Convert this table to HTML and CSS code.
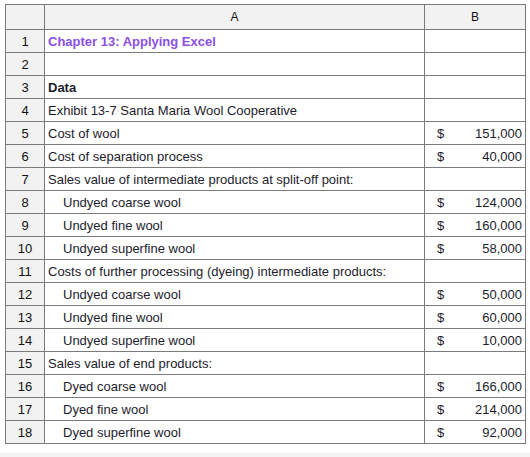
FILE: index.html
```html
<!DOCTYPE html>
<html>
<head>
<meta charset="utf-8">
<link rel="stylesheet" href="styles.css">
</head>
<body>
<div class="sheet">
<table class="grid">
<colgroup><col class="c-idx"><col class="c-a"><col class="c-b"></colgroup>
<thead>
<tr class="hdr"><th></th><th>A</th><th>B</th></tr>
</thead>
<tbody>
<tr><td class="idx">1</td><td class="title">Chapter 13: Applying Excel</td><td></td></tr>
<tr><td class="idx">2</td><td></td><td></td></tr>
<tr><td class="idx">3</td><td class="bold">Data</td><td></td></tr>
<tr><td class="idx">4</td><td>Exhibit 13-7 Santa Maria Wool Cooperative</td><td></td></tr>
<tr><td class="idx">5</td><td>Cost of wool</td><td><div class="money"><span>$</span><span>151,000</span></div></td></tr>
<tr><td class="idx">6</td><td>Cost of separation process</td><td><div class="money"><span>$</span><span>40,000</span></div></td></tr>
<tr><td class="idx">7</td><td>Sales value of intermediate products at split-off point:</td><td></td></tr>
<tr><td class="idx">8</td><td class="ind">Undyed coarse wool</td><td><div class="money"><span>$</span><span>124,000</span></div></td></tr>
<tr><td class="idx">9</td><td class="ind">Undyed fine wool</td><td><div class="money"><span>$</span><span>160,000</span></div></td></tr>
<tr><td class="idx">10</td><td class="ind">Undyed superfine wool</td><td><div class="money"><span>$</span><span>58,000</span></div></td></tr>
<tr><td class="idx">11</td><td>Costs of further processing (dyeing) intermediate products:</td><td></td></tr>
<tr><td class="idx">12</td><td class="ind">Undyed coarse wool</td><td><div class="money"><span>$</span><span>50,000</span></div></td></tr>
<tr><td class="idx">13</td><td class="ind">Undyed fine wool</td><td><div class="money"><span>$</span><span>60,000</span></div></td></tr>
<tr><td class="idx">14</td><td class="ind">Undyed superfine wool</td><td><div class="money"><span>$</span><span>10,000</span></div></td></tr>
<tr><td class="idx">15</td><td>Sales value of end products:</td><td></td></tr>
<tr><td class="idx">16</td><td class="ind">Dyed coarse wool</td><td><div class="money"><span>$</span><span>166,000</span></div></td></tr>
<tr><td class="idx">17</td><td class="ind">Dyed fine wool</td><td><div class="money"><span>$</span><span>214,000</span></div></td></tr>
<tr><td class="idx">18</td><td class="ind">Dyed superfine wool</td><td><div class="money"><span>$</span><span>92,000</span></div></td></tr>
</tbody>
</table>
</div>
<div class="strip"></div>
</body>
</html>
```
FILE: styles.css
```css
html, body {
  margin: 0;
  padding: 0;
  background: #ffffff;
}
body {
  font-family: "Liberation Sans", Arial, sans-serif;
  font-size: 13px;
  color: #1c1c2c;
}
.sheet {
  padding: 4px 5px 0 5px;
  height: 453px;
  box-sizing: border-box;
}
.grid {
  border-collapse: collapse;
  table-layout: fixed;
  width: 520px;
}
.c-idx { width: 39px; }
.c-a { width: 380px; }
.c-b { width: 101px; }
.grid th, .grid td {
  border: 1px solid #7b7b7b;
  padding: 0 0 0 3px;
  height: 22px;
  white-space: nowrap;
  overflow: hidden;
}
.grid th {
  background: #f2f2f2;
  font-weight: normal;
  font-size: 12px;
  height: 24px;
  text-align: center;
  padding: 0;
  color: #111;
}
.grid td.idx {
  background: #f2f2f2;
  text-align: center;
  padding: 0;
  color: #111;
}
.title {
  color: #8b4fe3;
  font-weight: bold;
}
.bold { font-weight: bold; }
.ind { padding-left: 18px !important; }
.money {
  display: flex;
  justify-content: space-between;
  padding: 0 3px 0 9px;
}
.strip {
  height: 4px;
  background: #f4f4f4;
}
```
